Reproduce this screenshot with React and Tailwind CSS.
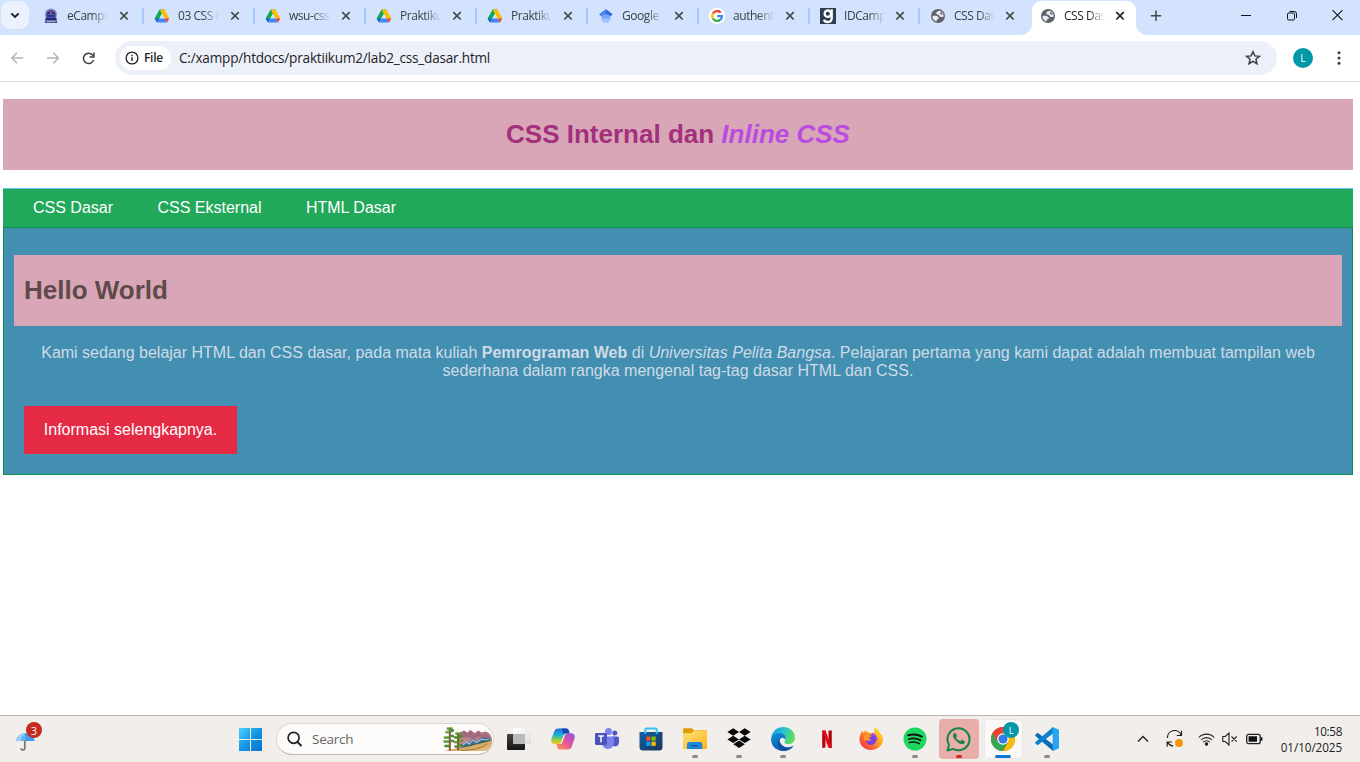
import React from "react";

const ui = "font-['Open_Sans','Noto_Sans',sans-serif]";

/* ---------- favicons ---------- */
function Drive() {
  return (
    <svg width="16" height="16" viewBox="0 0 16 16">
      <path d="M5.6 1.6h4.8L5.2 10.6 2.8 14.2.6 10.4z" fill="#0faa50" />
      <path d="M5.6 1.6h4.8l5 8.8h-4.9z" fill="#fbbc04" />
      <path d="M8 5.7 5.4 10.4h5.2z" fill="#d3e3fd" />
      <path d="M3 14.4.6 10.4h4.8l-2.4 4z" fill="#1967d2" />
      <path d="M5.4 10.4h5.2l2.4 4H3z" fill="#4285f4" />
      <path d="M10.6 10.4h4.8l-2.4 4z" fill="#ea4335" />
    </svg>
  );
}
function Campus() {
  return (
    <svg width="16" height="16" viewBox="0 0 16 16">
      <path d="M8 .6c3.600 0 6 2.300 6.200 5.600l-.9 5.600H2.700l-.9-5.600C2 2.900 4.400.6 8 .6z" fill="#9da3d6" />
      <path d="M8 1.500c3 0 5 2 5.200 4.700l-.7 4.600h-9l-.7-4.600C3 3.500 5 1.500 8 1.500z" fill="#5a61ae" />
      <path d="M8 2.600 11.700 5v4.500L14.200 11l-1.200 1H3l-1.200-1 2.500-1.500V5z" fill="#1f2a86" />
      <path d="M5 6.500h6M4.500 9.200h7" stroke="#8c95d2" strokeWidth=".6" />
      <path d="M7 3.400h2v2.400H7z" fill="#e0484d" />
      <path d="M2.200 12.300h11.600l.5 2.700H1.700z" fill="#4a5193" />
      <path d="M3.500 13.600h9" stroke="#c3c7e6" strokeWidth=".8" />
    </svg>
  );
}
function Scholar() {
  return (
    <svg width="16" height="16" viewBox="0 0 16 16">
      <circle cx="8" cy="10.400" r="4.700" fill="#a0c3ff" />
      <path d="M8 1.200 1.300 6.300 3.500 8.300h9l2.200-2z" fill="#3367d6" />
      <path d="M8 1.200 1.300 6.300 3.500 8.300H8z" fill="#4285f4" />
      <path d="M3.700 8.600c1.900-3.200 6.700-3.200 8.600 0 .1.700-.1 1.300-.4 1.900H4.100c-.3-.6-.5-1.200-.4-1.900z" fill="#76a7fa" />
    </svg>
  );
}
function GoogleG({ size = 16 }) {
  return (
    <svg width={size} height={size} viewBox="0 0 16 16" className="overflow-visible">
      <circle cx="8" cy="8" r="8.200" fill="#fff" />
      <g fill="none" strokeWidth="2.300">
        <path d="M11.800 4.600A4.900 4.900 0 0 0 3.900 5.500" stroke="#ea4335" />
        <path d="M3.900 5.500a4.900 4.900 0 0 0 0 5" stroke="#fbbc04" />
        <path d="M3.900 10.500a4.900 4.900 0 0 0 7.500 1.100" stroke="#34a853" />
        <path d="M11.400 11.600A4.900 4.900 0 0 0 12.900 8.200H8.200" stroke="#4285f4" />
      </g>
    </svg>
  );
}
function Dicoding() {
  return (
    <svg width="16" height="16" viewBox="0 0 16 16">
      <path fill="#2d3e50" d="M0 0h16v16H0z" />
      <g fill="none" stroke="#fff" strokeWidth="2.300">
        <circle cx="7.800" cy="5.700" r="3.200" />
        <path d="M11.700 1.300v9c0 2.500-1.600 3.700-3.900 3.700-1.900 0-3.400-.8-3.800-2.400" />
      </g>
    </svg>
  );
}
function Globe() {
  return (
    <svg width="16" height="16" viewBox="0 0 16 16">
      <circle cx="8" cy="8" r="7" fill="#5f6368" />
      <path d="M2.400 8.300c1.600-.6 3.400-.6 4.900 0 1 .5 1.600 1.200 1.500 2-.1.700-1 .8-1.600 1.300-.6.500-.6 1.300-.7 1.900-2.500-.7-4.100-2.600-4.100-5.200z" fill="#e3e9f4" />
      <path d="M9.700 2.700C8 2.800 6.200 3.700 6.200 5.200c0 1.300 1.600 1.300 2.500 1.800.9.600.9 1.700 2.100 2 1 .2 1.700-.4 2.800-.3.300-2.800-1.200-5.200-3.900-6z" fill="#e3e9f4" />
      <path d="M10.500 4.300c1 .2 1.900 1.100 2.100 2.400-1.100.3-1.800-.2-2.200-.9-.3-.6-.7-1.200.1-1.500z" fill="#5f6368" />
    </svg>
  );
}

function Cross({ active }) {
  return (
    <svg width="10" height="10" viewBox="0 0 10 10" className="shrink-0">
      <path d="m1.300 1.100 7.400 7.400m0-7.400L1.300 8.500" stroke={active ? "#1f1f1f" : "#45474a"} strokeWidth="1.700" />
    </svg>
  );
}

const tabs = [
  { t: "eCampus", i: <Campus />, w: "w-[111px]" },
  { t: "03 CSS D", i: <Drive />, w: "w-[111px]" },
  { t: "wsu-css-", i: <Drive />, w: "w-[111px]" },
  { t: "Praktikum", i: <Drive />, w: "w-[111px]" },
  { t: "Praktikum", i: <Drive />, w: "w-[111px]" },
  { t: "Google S", i: <Scholar />, w: "w-[111px]" },
  { t: "authentic", i: <GoogleG />, w: "w-[111px]" },
  { t: "IDCamp", i: <Dicoding />, w: "w-[110px]", narrow: true },
  { t: "CSS Dasar", i: <Globe />, w: "w-[110px]", narrow: true, last: true },
];

function TabLabel({ children, active }) {
  return (
    <span
      className={
        "w-[41px] shrink-0 overflow-hidden whitespace-nowrap text-[12px] leading-4 tracking-[-0.45px] [mask-image:linear-gradient(to_right,black_60%,transparent_100%)] " +
        (active ? "text-[#1f1f1f]" : "text-[#3c4043]")
      }
    >
      {children}
    </span>
  );
}

function TabStrip() {
  return (
    <div className="flex h-[35px] bg-[#d3e3fd]">
      <div className="flex w-[33px] items-start pl-[1px] pt-[1px]">
        <div className="flex h-7 w-7 items-center justify-center rounded-[9px] bg-[#ecf2fd]">
          <svg width="10" height="7" viewBox="0 0 10 7"><path d="m1.300 1.300 3.700 3.700 3.700-3.700" fill="none" stroke="#1f1f1f" strokeWidth="1.900" /></svg>
        </div>
      </div>
      {tabs.map((tab, k) => (
        <div key={k} className={"flex h-[31px] shrink-0 items-center pl-[10px] " + tab.w}>
          {tab.i}
          <span className="w-2 shrink-0" />
          <TabLabel>{tab.t}</TabLabel>
          <span className={tab.narrow ? "w-[10px] shrink-0" : "w-[11px] shrink-0"} />
          <Cross />
          {!tab.last && <span className="ml-auto h-4 w-[2px] bg-[#a8c7fa]" />}
        </div>
      ))}
      <div className="-ml-[9px] flex h-[35px] shrink-0 items-end">
        <svg width="11" height="11" viewBox="0 0 11 11"><path d="M11 0v11H0C6 11 11 6 11 0z" fill="#fff" /></svg>
        <div className="flex h-[34px] w-[104px] items-center rounded-t-[9px] bg-white pb-[5px] pl-[8px]">
          <Globe />
          <span className="w-2 shrink-0" />
          <TabLabel active>{"CSS Dasar"}</TabLabel>
          <span className="w-[10px] shrink-0" />
          <Cross active />
        </div>
        <svg width="11" height="11" viewBox="0 0 11 11"><path d="M0 0v11h11C5 11 0 6 0 0z" fill="#fff" /></svg>
      </div>
      <div className="flex h-[31px] flex-1 items-center pl-[3px]">
        <svg width="12" height="12" viewBox="0 0 12 12"><path d="M6 .5v10.400M.8 5.700h10.400" stroke="#45474a" strokeWidth="1.500" /></svg>
        <svg className="ml-[79px]" width="10" height="10" viewBox="0 0 10 10"><path d="M0 4.500h10" stroke="#111" /></svg>
        <svg className="ml-[36px]" width="10" height="10" viewBox="0 0 10 10" fill="none" stroke="#111"><rect x=".5" y="2" width="7" height="7" rx="1.200" /><path d="M2.500.5h4.800A2.200 2.200 0 0 1 9.500 2.700v4.300" /></svg>
        <svg className="ml-[35px]" width="11" height="11" viewBox="0 0 11 11"><path d="m.5.200 10 10m0-10-10 10" stroke="#111" strokeWidth="1.100" /></svg>
      </div>
    </div>
  );
}

function Toolbar() {
  return (
    <div className="flex h-[47px] items-center rounded-tr-[8px] border-b border-[#dddfe2] bg-white">
      <div className="flex w-[115px] shrink-0 items-center pl-[11px]">
        <svg width="13" height="12" viewBox="0 0 13 12" fill="none" stroke="#b4b5b7" strokeWidth="1.500"><path d="M6 .7.900 6 6 11.300M1 6h11.300" /></svg>
        <svg className="ml-[23px]" width="13" height="12" viewBox="0 0 13 12" fill="none" stroke="#b4b5b7" strokeWidth="1.500"><path d="M6.300.7 11.400 6l-5.100 5.300M11.300 6H0" /></svg>
        <svg className="ml-[22px]" width="13" height="13" viewBox="0 0 13 13"><path d="M11.600 8.100A5.200 5.200 0 1 1 10.600 2.900L11.600 4.200" fill="none" stroke="#3c4043" strokeWidth="1.500" /><path d="M11.900.6V5H7.500" fill="none" stroke="#3c4043" strokeWidth="1.500" /></svg>
      </div>
      <div className="flex h-[34px] w-[1162px] shrink-0 items-center rounded-full bg-[#ecf0f9] pl-[5px] pr-[16px]">
        <div className="flex h-6 w-[51px] items-center rounded-full bg-white pl-[5px]">
          <svg width="14" height="14" viewBox="0 0 14 14"><circle cx="7" cy="7" r="5.900" fill="none" stroke="#1f1f1f" strokeWidth="1.300" /><path d="M7 6.200V10M7 3.800v1.500" stroke="#1f1f1f" strokeWidth="1.400" /></svg>
          <span className="ml-[5px] text-[12px] font-semibold leading-4 tracking-[-0.3px] text-[#1f1f1f]">File</span>
        </div>
        <span className="ml-2 whitespace-nowrap text-[13.6px] leading-5 tracking-[-0.220px] text-[#1f1f1f]">C:/xampp/htdocs/praktiikum2/lab2_css_dasar.html</span>
        <svg className="ml-auto" width="16" height="16" viewBox="0 0 16 16"><path d="m8 1.700 1.850 4.200 4.550.4-3.450 3 1.050 4.450L8 11.400l-4 2.350 1.050-4.450-3.450-3 4.550-.4z" fill="none" stroke="#3c4043" strokeWidth="1.500" /></svg>
      </div>
      <div className="ml-4 flex h-5 w-5 items-center justify-center rounded-full bg-[#0097a7] text-[10.5px] leading-none text-white">L</div>
      <svg className="ml-[24px]" width="4" height="16" viewBox="0 0 4 16" fill="#3c4043"><circle cx="2" cy="2.800" r="1.500" /><circle cx="2" cy="8" r="1.500" /><circle cx="2" cy="13.200" r="1.500" /></svg>
    </div>
  );
}

function Page() {
  return (
    <main className="h-[633px] bg-white pl-[3px] pr-[7px] pt-[17px] font-['Liberation_Sans',Arial,sans-serif]">
      <h1 className="h-[71px] bg-[#d9a6b7] pt-5 text-center text-[26px] font-bold leading-[30px] text-[#a3307d]">
        CSS Internal dan <i className="text-[#b94be0]">Inline CSS</i>
      </h1>
      <nav className="mt-[18px] flex h-[39px] gap-[44.450px] border-t border-[#62c0f0] bg-[#22a85a] pl-[30px] pt-[10px] text-[16px] leading-[18px] text-white">
        <a>CSS Dasar</a>
        <a>CSS Eksternal</a>
        <a>HTML Dasar</a>
      </nav>
      <section className="h-[248px] border border-[#0a924c] bg-[#428fb1] px-[10px] pt-[27px]">
        <h1 className="h-[71px] bg-[#d9a6b7] pl-[10px] pt-5 text-[26px] font-bold leading-[30px] text-[#5f4a4a]">Hello World</h1>
        <p className="mt-[18px] px-[10px] text-center text-[16px] leading-[18px] text-[#cfdbe6]">
          Kami sedang belajar HTML dan CSS dasar, pada mata kuliah <b>Pemrograman Web</b> di <i>Universitas Pelita Bangsa</i>. Pelajaran pertama yang kami dapat adalah membuat tampilan web sederhana dalam rangka mengenal tag-tag dasar HTML dan CSS.
        </p>
        <a className="ml-[10px] mt-[26px] flex h-12 w-[213px] items-center justify-center bg-[#e42a44] text-[16px] leading-[18px] text-white">Informasi selengkapnya.</a>
      </section>
    </main>
  );
}

/* ---------- taskbar icons ---------- */
const Copilot = () => (
  <svg width="24" height="24" viewBox="0 0 24 24">
    <defs>
      <linearGradient id="cpa" x1="0" y1="0" x2="0" y2="1"><stop offset="0" stopColor="#1b6fe0" /><stop offset=".45" stopColor="#1eb5d5" /><stop offset=".7" stopColor="#8ecb4a" /><stop offset="1" stopColor="#f6c51c" /></linearGradient>
      <linearGradient id="cpb" x1="1" y1="0" x2="0" y2="1"><stop offset="0" stopColor="#8a5be8" /><stop offset=".45" stopColor="#e14fa3" /><stop offset="1" stopColor="#ff9a45" /></linearGradient>
    </defs>
    <path d="M7.500 1.500H15c1.500 0 2.300.8 2.800 2.300l.8 2.400h-3.300c-1.500 0-2.300.8-2.800 2.300L10 15c-.4 1.300-1.200 2-2.500 2H3.800C.8 17-.3 15 .4 12L3 5c.8-2.400 2-3.500 4.500-3.500z" fill="url(#cpa)" />
    <path d="M16.500 22.500H9c-1.500 0-2.300-.8-2.800-2.300L5.400 17h3.300c1.500 0 2.300-.8 2.800-2.300L14 8.200c.4-1.300 1.200-2 2.500-2h3.700c3 0 4.100 2 3.400 5L21 19c-.8 2.400-2 3.500-4.500 3.500z" fill="url(#cpb)" />
    <path d="M10.500 1.500H15c1.500 0 2.300.8 2.800 2.300l.8 2.400h-3.300c-1 0-1.800.4-2.300 1.300z" fill="#1746b4" />
  </svg>
);
const Teams = () => (
  <svg width="24" height="24" viewBox="0 0 24 24">
    <circle cx="19.800" cy="6" r="2.500" fill="#5059c9" />
    <circle cx="13.500" cy="4.500" r="3.500" fill="#7b83eb" />
    <path d="M17 9.500h5.500A1.500 1.500 0 0 1 24 11v4.500a4 4 0 0 1-7 2.600z" fill="#5059c9" />
    <path d="M8 9.500h9.700a1.200 1.200 0 0 1 1.200 1.200V16a6 6 0 0 1-12 0z" fill="#7b83eb" />
    <rect x="0" y="6" width="12" height="12" rx="1.200" fill="#4b53bc" />
    <path d="M3.300 9h5.400M6 9v6.300" stroke="#fff" strokeWidth="1.500" />
  </svg>
);
const Store = () => (
  <svg width="24" height="24" viewBox="0 0 24 24">
    <defs><linearGradient id="sto" x1="0" y1="0" x2="1" y2="1"><stop offset="0" stopColor="#0f62a8" /><stop offset="1" stopColor="#1b3358" /></linearGradient></defs>
    <path d="M.5 5h23v15a3.500 3.500 0 0 1-3.500 3.500H4A3.500 3.500 0 0 1 .5 20z" fill="url(#sto)" />
    <path d="M6.300 7V2.500A1 1 0 0 1 7.300 1.500h9.400a1 1 0 0 1 1 1V7" fill="none" stroke="#35c1f1" strokeWidth="1.900" />
    <path d="M7.300 9.500h4.200v4.200H7.300z" fill="#f25022" /><path d="M12.500 9.500h4.200v4.200h-4.200z" fill="#7fba00" /><path d="M7.300 14.700h4.200v4.200H7.300z" fill="#00a4ef" /><path d="M12.500 14.700h4.200v4.200h-4.200z" fill="#ffb900" />
  </svg>
);
const Folder = () => (
  <svg width="24" height="24" viewBox="0 0 24 24">
    <defs><linearGradient id="fol" x1="0" y1="0" x2="1" y2="1"><stop offset="0" stopColor="#ffe07a" /><stop offset="1" stopColor="#fbb61c" /></linearGradient></defs>
    <path d="M0 2.500A1.200 1.200 0 0 1 1.200 1.300h7.300L11 3h11.800A1.200 1.200 0 0 1 24 4.200V9H0z" fill="#dd9c0a" />
    <path d="M0 6.200h8.500L11 3.300h11.800A1.200 1.200 0 0 1 24 4.500v17.500H0z" fill="url(#fol)" />
    <path d="M4 22v-4.500A2.500 2.500 0 0 1 6.500 15h10.300a2.500 2.500 0 0 1 2.500 2.500V22z" fill="#1e86d8" />
    <path d="M8.300 18.700h6.700" stroke="#0d57a5" strokeWidth="1.300" />
  </svg>
);
const Dropbox = () => (
  <svg width="24" height="24" viewBox="0 0 24 24" fill="#0a0a0a">
    <path d="m6.200 1.300 5.800 3.700-5.800 3.700L.4 5zM17.800 1.300 23.600 5l-5.800 3.700L12 5zM.4 12.400l5.800-3.700 5.800 3.700-5.800 3.700zM17.800 8.700l5.800 3.700-5.800 3.700-5.800-3.700zM6.300 17.300 12.100 13.600l5.700 3.700-5.700 3.700z" />
  </svg>
);
const Edge = () => (
  <svg width="24" height="24" viewBox="0 0 24 24">
    <defs>
      <linearGradient id="ega" x1="0" y1=".2" x2="1" y2=".5"><stop offset="0" stopColor="#1a9fe0" /><stop offset=".5" stopColor="#2bc3cf" /><stop offset="1" stopColor="#66e052" /></linearGradient>
      <linearGradient id="egb" x1="0" y1="0" x2=".8" y2="1"><stop offset="0" stopColor="#1590dd" /><stop offset="1" stopColor="#0a4f9f" /></linearGradient>
    </defs>
    <path d="M.3 10.500C1.200 4.200 6 0 12 0c7 0 12 5 12 10.500 0 4.200-3 6.600-6.400 6.600-2.800 0-4.200-1.100-4.200-1.900 0-.7 1.100-1.300 1.100-3.200C14.500 9 11.500 7.200 8.500 7.200 5 7.200 2 8 .3 10.500z" fill="url(#ega)" />
    <path d="M0 12.500c0-3.700 3.500-6.500 8-6.500 4.200 0 6.500 2.800 6.500 5.500 0 .6-.1 1.100-.3 1.600-.3-1.300-1.400-2.300-2.900-2.300-1.900.3-3 2.200-3 4.200 0 3.700 3.300 6.400 7.500 6.400 2.400 0 4.700-.8 6.400-2.400.2 0 .3.200.2.400C20.300 22 16.500 24 12 24 5.500 24 0 19 0 12.500z" fill="url(#egb)" />
    <path d="M8.600 12.500c-3.200 3.500-1.800 9.500 3 11.500h.6c4.100 0 7.700-2 9.900-5.200-1.800 1.200-4.200 1.700-6.400 1.400-4-.5-7.200-3.700-7.100-7.700z" fill="#0f50a0" />
  </svg>
);
const Netflix = () => (
  <svg width="24" height="24" viewBox="0 0 24 24"><path d="M7.200 3.500h3.300v17l-3.300.5zM13.500 3.500h3.300V21l-3.300-.5z" fill="#b20710" /><path d="M7.200 3.500h3.300L16.800 21l-3.500-.5z" fill="#e50914" /></svg>
);
const Firefox = () => (
  <svg width="24" height="24" viewBox="0 0 24 24">
    <defs>
      <linearGradient id="ffa" x1="1" y1="0" x2="0" y2="1"><stop offset="0" stopColor="#fff14a" /><stop offset=".35" stopColor="#ffb01e" /><stop offset=".65" stopColor="#ff6a2b" /><stop offset="1" stopColor="#ec1d62" /></linearGradient>
    </defs>
    <path d="M16.400.5c2.300 1.800 4.300 4 5 6.200.8.200 1.400.8 1.800 1.700.8 2 .9 3.500.7 5.200C23.200 19 18.200 23 12.200 23 5.700 23 .5 18.500.5 12.200c0-2 .4-3.500 1-5L3 3.800l1.200 2 3-3-.1 2.300c1.500-.2 3 .2 4.200 1l3.900.2c-.6-2.400 0-4.300 1.200-5.800z" fill="url(#ffa)" />
    <circle cx="12" cy="12.800" r="5.200" fill="#7542e5" />
    <path d="M5 9c1.500-2 4-2.200 6.200-.8l1.300 1.500-2.700 1.100c-.2 1.200 1.700 2.100 3 1.300-1 2.200-4 2.400-5.500.8L5 14z" fill="#ff9428" />
    <path d="M13 6.500c2.800 1 4.600 3.600 4.500 6.700" fill="none" stroke="#a343de" strokeWidth="1.500" />
  </svg>
);
const Spotify = () => (
  <svg width="24" height="24" viewBox="0 0 24 24"><circle cx="12" cy="12" r="11.500" fill="#1ed760" /><g fill="none" stroke="#111" strokeLinecap="round"><path d="M5.200 8.300c4.600-1.300 9.600-.9 13.600 1.300" strokeWidth="2.100" /><path d="M5.800 12c4-1.100 8.200-.7 11.700 1.200" strokeWidth="1.800" /><path d="M6.400 15.500c3.500-.9 6.700-.6 9.900 1.100" strokeWidth="1.500" /></g></svg>
);
const Whatsapp = () => (
  <svg width="26" height="26" viewBox="0 0 26 26"><path d="M1.500 24.500 3 18.800a11 11 0 1 1 4.200 4.100z" fill="none" stroke="#16834d" strokeWidth="2" strokeLinejoin="round" /><path d="M9.500 7.300c-.6-.7-1.200-.5-1.700.1-1.300 1.500-.8 3.600.5 5.400 1.900 2.700 4 4.500 6.600 5.300 1.700.5 3.400-.3 3.900-1.700.2-.7.100-1.200-.4-1.400l-2.200-1.100c-.4-.2-.7-.1-1 .3l-.9 1.100c-2-.7-3.400-2-4.400-3.700l.8-1c.3-.4.3-.7.100-1.100z" fill="#16834d" /></svg>
);
const Chrome = () => (
  <svg width="24" height="24" viewBox="0 0 24 24">
    <circle cx="12" cy="12" r="12" fill="#ea4335" />
    <path d="M1.600 6A12 12 0 0 0 12 24l5.200-9H6.800z" fill="#34a853" />
    <path d="M22.400 6A12 12 0 0 1 12 24l5.200-9L12 6z" fill="#fbbc04" />
    <path d="M1.600 6A12 12 0 0 1 22.400 6H12l-5.200 9z" fill="#ea4335" />
    <circle cx="12" cy="12" r="5.800" fill="#fff" /><circle cx="12" cy="12" r="4.600" fill="#347bea" />
  </svg>
);
const VSCode = () => (
  <svg width="24" height="24" viewBox="0 0 24 24">
    <path d="M.5 7.600 2 6.200c.4-.3.900-.3 1.300 0l14.700 11.300V24L.5 9c-.5-.4-.5-1 0-1.400z" fill="#0b6cb8" />
    <path d="M.5 16.400 2 17.800c.4.300.9.300 1.300 0L18 6.500V0L.5 15c-.5.400-.5 1 0 1.400z" fill="#0b82cf" />
    <path d="M17.600 0 23 2.300c.6.300 1 .8 1 1.500v16.400c0 .7-.4 1.200-1 1.500L17.600 24z" fill="#2aa5f2" />
  </svg>
);

const apps = [
  { i: <Copilot /> },
  { i: <Teams /> },
  { i: <Store /> },
  { i: <Folder />, d: true },
  { i: <Dropbox />, d: true },
  { i: <Edge />, d: true },
  { i: <Netflix /> },
  { i: <Firefox /> },
  { i: <Spotify />, d: true },
  { i: <Whatsapp />, box: "h-10 w-10 rounded-[4px] bg-[#e8aeaa]", dot: "w-[6px] bg-[#c42b1c]" },
  { i: <Chrome />, box: "h-10 w-[39px] rounded-[4px] border border-[#ebe7e5] bg-[#fbf9f8]", dot: "w-4 bg-[#0a78d4]", badge: true },
  { i: <VSCode />, d: true },
];

function Scenery() {
  return (
    <svg width="50" height="26" viewBox="0 0 50 26" className="block">
      <defs>
        <linearGradient id="sky" x1="0" y1="0" x2="0" y2="1"><stop offset="0" stopColor="#a9677a" /><stop offset="1" stopColor="#dba9a0" /></linearGradient>
        <linearGradient id="fld" x1="0" y1="0" x2="1" y2="1"><stop offset="0" stopColor="#b9873c" /><stop offset="1" stopColor="#e8c486" /></linearGradient>
      </defs>
      <path d="M14 8.500 18 6l3-1.500 3 2L27.500 4l4 3 4-2.500 3 2 4-1c4 1 6.500 4.500 6.500 9 0 6-3 10.500-8 10.500H14z" fill="url(#sky)" />
      <path d="m18 11 4-5.500 2.500 3.500 3-4 4 5 4-4.500 3.500 4 4-2 3.500 4-6 1-4-2-6 3-5-2.500z" fill="#8d5f7c" opacity=".55" />
      <path d="M17 22l5-6.500 3 1.500 5-4.500 4 2.500 5-4 3.500 1 4-.5 1.500 3-6 3.500-10 2.500-9 3z" fill="#3c6f8a" />
      <path d="m20 19 3-3 3 2 4-4 3.500 2.500L39 13l3 1 4-1" fill="none" stroke="#a9bfe0" strokeWidth="1.200" />
      <path d="M18 23c3-2 6-3 10-4s8-2 11-3.500l8.500-1-2 3-13 4.500z" fill="#1f5a45" />
      <path d="M1 25c8-2.500 17-2.500 26-5 8-2 14-3.500 21.500-5.500C49 21 46 25 40.500 25z" fill="url(#fld)" />
      <path d="M18 24.500c10-.5 20-1.500 26-6.500" stroke="#a9742f" fill="none" />
      <path d="M6.800 2v22.500M15.200 7v17" stroke="#8a5330" strokeWidth="2" />
      <path d="M5 2.500h3.500M3.500 6h2M8.500 5l1.500-.5M2 11.500h3.500M8 10h2M1.500 15.500h3.500M2.500 20h3M8.500 15h1.500M13.500 7.500h4M12 11.500h2M16.500 10.500h2M12 16h2M16.500 14.500h2.500M12.500 20.500h1.500M16.500 19h2" stroke="#4f8a36" strokeWidth="2.600" fill="none" strokeLinecap="round" />
      <path d="M5 1.800h3M3.500 5.400h2M2.200 10.800h3M1.700 14.800h3M13.700 6.800h3.300M16.800 13.800h2M12 15.300h1.800" stroke="#a9c94e" strokeWidth="1.100" strokeLinecap="round" />
    </svg>
  );
}

function Taskbar() {
  return (
    <footer className="flex h-[47px] border-t border-[#b9b5b3] bg-[#f2eeeb]">
      <div className="relative w-[238px] shrink-0 pl-[15px] pt-[15px]">
        <svg width="21" height="21" viewBox="0 0 21 21">
          <path d="M.8 10C1.800 5.200 5.500 2.300 10.300 2.300s8.400 2.700 9.400 7.700z" fill="#3f9df2" />
          <path d="M10.300 2.300C8 4.300 6.400 7 6.200 10H.8C1.800 5.200 5.500 2.300 10.300 2.300z" fill="#9dd0fb" />
          <path d="M10.300 2.300C8.500 4.500 7.500 7 7 10h3.500z" fill="#6ab6f7" />
          <path d="M9.800 9.500V17c0 2.600-3.800 2.600-3.800.3" fill="none" stroke="#777" strokeWidth="1.700" />
        </svg>
        <span className="absolute left-[26px] top-[6px] flex h-4 w-4 items-center justify-center rounded-full bg-[#c42b1c] text-[11px] leading-none text-white">3</span>
      </div>
      <div className="flex w-[38px] shrink-0 items-center pl-[1px]">
        <svg width="23" height="23" viewBox="0 0 23 23">
          <defs><linearGradient id="win" gradientUnits="userSpaceOnUse" x1="0" y1="0" x2="23" y2="23"><stop offset="0" stopColor="#4fd3fb" /><stop offset=".5" stopColor="#1595e3" /><stop offset="1" stopColor="#0672cf" /></linearGradient></defs>
          <path d="M0 0h11v11H0zM12 0h11v11H12zM0 12h11v11H0zM12 12h11v11H12z" fill="url(#win)" />
        </svg>
      </div>
      <div className="mt-[7px] flex h-8 w-[218px] shrink-0 items-center rounded-full border border-[#dcd8d6] border-b-[#bdb9b7] bg-[#fcfbfa] pl-[10px]">
        <svg width="16" height="16" viewBox="0 0 16 16"><circle cx="6.600" cy="6.800" r="5.500" fill="none" stroke="#222" strokeWidth="1.700" /><path d="m10.500 11 4 4" stroke="#222" strokeWidth="2" /></svg>
        <span className="ml-[9px] text-[13.500px] leading-5 tracking-[-0.250px] text-[#666]">Search</span>
        <span className="ml-auto"><Scenery /></span>
      </div>
      <div className="flex w-[47px] shrink-0 items-center pl-[13px]">
        <svg width="24" height="23" viewBox="0 0 24 23">
          <defs>
            <linearGradient id="tv" x1="0" y1="0" x2="0" y2="1"><stop offset="0" stopColor="#444" /><stop offset="1" stopColor="#151515" /></linearGradient>
            <linearGradient id="tw" x1="0" y1="0" x2="1" y2="1"><stop offset="0" stopColor="#fff" /><stop offset="1" stopColor="#ddd" /></linearGradient>
          </defs>
          <rect x="0" y="6" width="18" height="16" rx="1" fill="url(#tv)" /><rect x="6" y="0" width="18" height="16" rx="1" fill="url(#tw)" /><path d="M6 6h12v10H6z" fill="#b9b9b9" />
        </svg>
      </div>
      <div className="flex shrink-0">
        {apps.map((a, k) => (
          <div key={k} className="relative flex h-[46px] w-11 items-center justify-center">
            <div className={"flex items-center justify-center " + (a.box || "h-10 w-10")}>{a.i}</div>
            {a.badge && <span className="absolute left-[22px] top-[6px] flex h-4 w-4 items-center justify-center rounded-full bg-[#0797a7] text-[9px] leading-none text-white">L</span>}
            {(a.d || a.dot) && <span className={"absolute bottom-[4px] left-1/2 h-[3px] -translate-x-1/2 rounded-full " + (a.dot || "w-[6px] bg-[#8c8987]")} />}
          </div>
        ))}
      </div>
      <div className="flex flex-1 items-center pl-[68px]">
        <svg width="12" height="8" viewBox="0 0 12 8"><path d="m1 6.500 5-5 5 5" fill="none" stroke="#222" strokeWidth="1.300" /></svg>
        <svg className="ml-[17px]" width="18" height="18" viewBox="0 0 18 18">
          <path d="M1.500 8A7 7 0 0 1 15 5M15.500.8V5.500h-4.700M7 16.200C4.500 15.700 2.600 14.300 1.500 12M1.200 16.800V12h4.700" fill="none" stroke="#222" strokeWidth="1.200" /><circle cx="13" cy="13" r="4" fill="#f7960b" />
        </svg>
        <svg className="ml-[14px]" width="17" height="14" viewBox="0 0 17 14" fill="none" stroke="#222" strokeWidth="1.100"><path d="M.8 5.500a10.500 10.500 0 0 1 15.400 0M3 8a7.500 7.500 0 0 1 11 0M5.200 10.200a4.700 4.700 0 0 1 6.600 0" /><circle cx="8.500" cy="12" r="1.200" fill="#222" /></svg>
        <svg className="ml-[7px]" width="16" height="14" viewBox="0 0 16 14" fill="none" stroke="#222" strokeWidth="1.100"><path d="M.8 4.500h2.400L7 1v12L3.200 9.500H.8zM9.500 4.500l5.200 5.200m0-5.200L9.500 9.700" /></svg>
        <svg className="ml-[8px]" width="17" height="12" viewBox="0 0 17 12"><rect x=".7" y="1.300" width="13.500" height="9.400" rx="2" fill="none" stroke="#222" strokeWidth="1.300" /><path d="M2.600 3.200H11v5.600H2.600zM14.800 4.200h1.600v3.600h-1.600z" fill="#111" /></svg>
        <div className="ml-auto mr-[18px] pb-px text-right text-[11.700px] leading-4 tracking-[-0.080px] text-[#222]">
          <div className="tracking-[-0.350px]">10:58</div>
          <div>01/10/2025</div>
        </div>
      </div>
    </footer>
  );
}

export default function App() {
  return (
    <div className={"flex h-[762px] w-[1360px] flex-col overflow-hidden bg-white " + ui}>
      <TabStrip />
      <Toolbar />
      <Page />
      <Taskbar />
    </div>
  );
}
